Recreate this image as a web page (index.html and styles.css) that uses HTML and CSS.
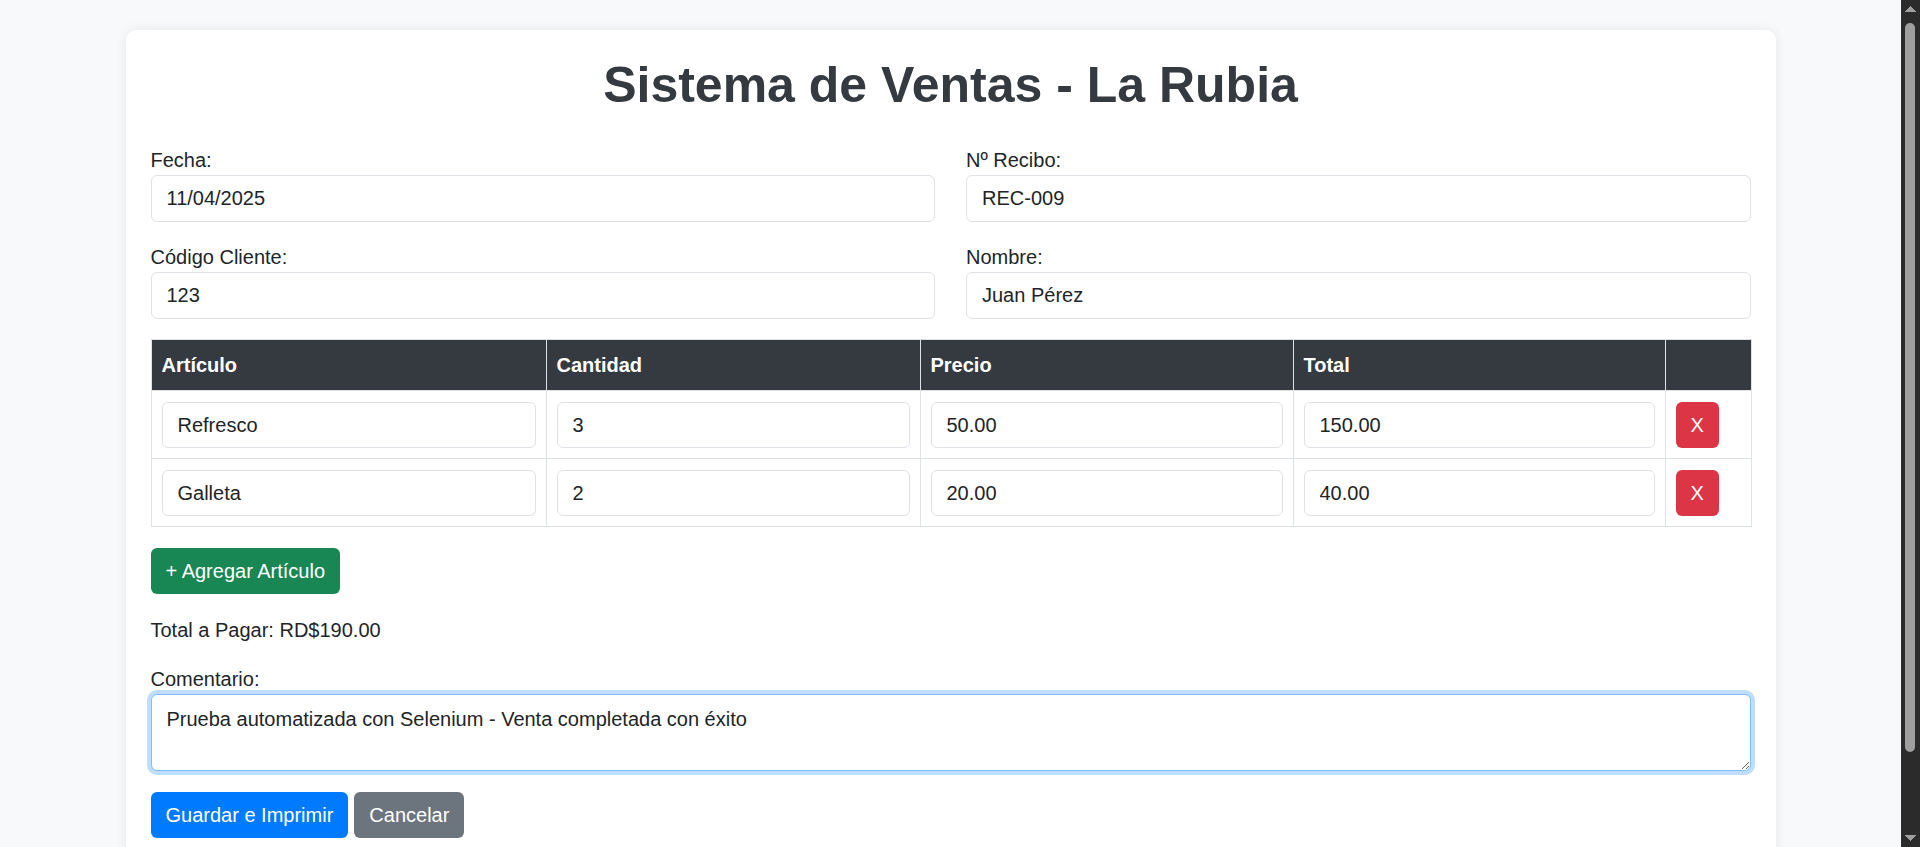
FILE: index.html
```html
<!DOCTYPE html>
<html lang="es">
<head>
<meta charset="utf-8">
<title>Sistema de Ventas - La Rubia</title>
<link rel="stylesheet" href="styles.css">
</head>
<body>
<div class="page">
  <div class="card">
    <h1 class="title">Sistema de Ventas - La Rubia</h1>
    <div class="fields">
      <div class="group">
        <label class="label">Fecha:</label>
        <input class="control" type="text" value="11/04/2025">
      </div>
      <div class="group">
        <label class="label">Nº Recibo:</label>
        <input class="control" type="text" value="REC-009">
      </div>
      <div class="group">
        <label class="label">Código Cliente:</label>
        <input class="control" type="text" value="123">
      </div>
      <div class="group">
        <label class="label">Nombre:</label>
        <input class="control" type="text" value="Juan Pérez">
      </div>
    </div>

    <table class="items">
      <colgroup>
        <col class="c-art">
        <col class="c-cant">
        <col class="c-precio">
        <col class="c-total">
        <col class="c-act">
      </colgroup>
      <thead>
        <tr>
          <th>Artículo</th>
          <th>Cantidad</th>
          <th>Precio</th>
          <th>Total</th>
          <th></th>
        </tr>
      </thead>
      <tbody>
        <tr>
          <td><input class="control" type="text" value="Refresco"></td>
          <td><input class="control" type="text" value="3"></td>
          <td><input class="control" type="text" value="50.00"></td>
          <td><input class="control" type="text" value="150.00"></td>
          <td><button class="btn btn-danger">X</button></td>
        </tr>
        <tr>
          <td><input class="control" type="text" value="Galleta"></td>
          <td><input class="control" type="text" value="2"></td>
          <td><input class="control" type="text" value="20.00"></td>
          <td><input class="control" type="text" value="40.00"></td>
          <td><button class="btn btn-danger">X</button></td>
        </tr>
      </tbody>
    </table>

    <div class="add-row">
      <button class="btn btn-success">+ Agregar Artículo</button>
    </div>

    <div class="total">Total a Pagar: RD$190.00</div>

    <label class="label">Comentario:</label>
    <textarea class="control comment is-focused" id="comment">Prueba automatizada con Selenium - Venta completada con éxito</textarea>

    <div class="actions">
      <button class="btn btn-primary">Guardar e Imprimir</button>
      <button class="btn btn-secondary">Cancelar</button>
    </div>
  </div>
</div>

<div class="vscroll" aria-hidden="true">
  <div class="vs-arrow vs-up"></div>
  <div class="vs-track"><div class="vs-thumb"></div></div>
  <div class="vs-arrow vs-down"></div>
</div>
<script src="script.js"></script>
</body>
</html>
```

FILE: styles.css
```css
html {
  background: #f8f9fa;
  scrollbar-width: none;
}

body {
  margin: 0;
  font-family: "Liberation Sans", Arial, sans-serif;
  font-size: 20px;
  line-height: 30px;
  color: #212529;
}

.page {
  padding: 30px 19px 76px 0;
}

.card {
  box-sizing: border-box;
  width: 1650px;
  margin: 0 auto;
  padding: 25px;
  background: #fff;
  border-radius: 10px;
  box-shadow: 0 0 12px rgba(0, 0, 0, 0.08);
}

.title {
  margin: 0 0 30px;
  font-size: 50px;
  line-height: 60px;
  font-weight: bold;
  text-align: center;
  color: #343a40;
}

.fields {
  display: grid;
  grid-template-columns: 1fr 1fr;
  column-gap: 31px;
  row-gap: 20px;
  margin-bottom: 20px;
}

.label {
  display: block;
  line-height: 30px;
}

.control {
  display: block;
  box-sizing: border-box;
  width: 100%;
  height: 46px;
  margin: 0;
  padding: 0 15px;
  font-family: inherit;
  font-size: 20px;
  color: #212529;
  background: #fff;
  border: 1px solid #dee2e6;
  border-radius: 6px;
  outline: none;
}

.fields .control {
  height: 47px;
}

.items {
  width: 100%;
  table-layout: fixed;
  border-collapse: collapse;
}

.c-art { width: 395px; }
.c-cant { width: 374px; }
.c-precio { width: 373px; }
.c-total { width: 372px; }
.c-act { width: 86px; }

.items th,
.items td {
  padding: 10px;
  border: 1px solid #dee2e6;
  text-align: left;
  vertical-align: middle;
}

.items td {
  padding: 11px 10px 10px;
}

.items th {
  background: #343a40;
  color: #fff;
  font-weight: bold;
}

.btn {
  display: inline-block;
  margin: 0;
  padding: 10px 15px;
  font-family: inherit;
  font-size: 20px;
  line-height: 26px;
  color: #fff;
  border: 0;
  border-radius: 6px;
  cursor: pointer;
}

.btn-danger { background: #dc3545; display: block; }
.btn-success { background: #198754; }
.btn-primary { background: #007bff; }
.btn-secondary { background: #6c757d; }

.add-row {
  margin-top: 21px;
  display: flex;
}

.total {
  margin: 21px 0 19px;
}

.comment {
  height: 77px;
  padding: 9px 15px;
  line-height: 30px;
  resize: vertical;
}

.comment.is-focused,
.comment:focus {
  border-color: #80bdff;
  box-shadow: 0 0 0 4px rgba(0, 123, 255, 0.25);
}

.actions {
  display: flex;
  gap: 6px;
  margin-top: 21px;
}

/* replica of the window's dark scrollbar */
.vscroll {
  position: fixed;
  top: 0;
  right: 0;
  width: 19px;
  height: 100vh;
  background: #2b2b2b;
  display: flex;
  flex-direction: column;
  align-items: center;
}

.vs-arrow {
  flex: 0 0 19px;
  width: 11px;
}

.vs-up {
  background: conic-gradient(from 135deg at 50% 0%, #9f9f9f 0 90deg, transparent 0) no-repeat 50% 6px / 11px 6px;
}

.vs-down {
  background: conic-gradient(from -45deg at 50% 100%, #9f9f9f 0 90deg, transparent 0) no-repeat 50% 7px / 11px 6px;
}

.vs-track {
  flex: 1;
  width: 100%;
  display: flex;
  justify-content: center;
  padding-top: 4px;
}

.vs-thumb {
  width: 10px;
  height: 729px;
  margin-left: -1px;
  background: #9f9f9f;
  border-radius: 5px;
}
```

FILE: script.js
```js
var c = document.getElementById('comment');
c.focus();
c.setSelectionRange(c.value.length, c.value.length);
```
